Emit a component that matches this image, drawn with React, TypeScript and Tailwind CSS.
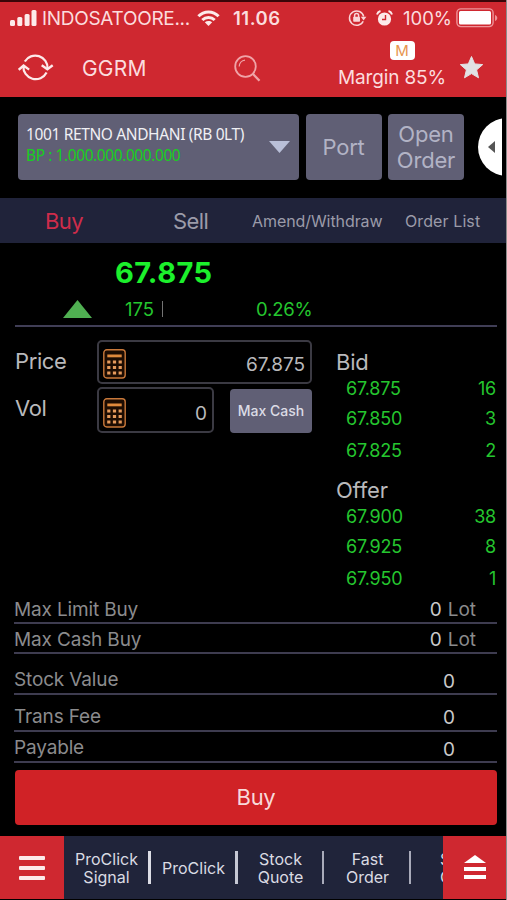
import type { ReactNode } from "react";

function Signal() {
  return (
    <svg className="block h-[17px] w-[27px]" viewBox="0 0 27 17" fill="#fdeaea">
      <rect x="0" y="10" width="5" height="6" rx="1.5" />
      <rect x="7.3" y="7" width="5" height="9" rx="1.5" />
      <rect x="14.6" y="4" width="5" height="12" rx="1.5" />
      <rect x="21.5" y="0" width="5" height="16" rx="1.5" />
    </svg>
  );
}

function Wifi() {
  return (
    <svg className="block h-[17px] w-[23px]" viewBox="0 0 23 17" fill="none" stroke="#fdeaea" strokeWidth="3">
      <path d="M1.400 6.200C7 .5 16 .5 21.600 6.200" />
      <path d="M5.300 10C8.800 6.600 14.200 6.600 17.700 10" />
      <path d="M7.800 12.300C10 10.400 13 10.400 15.200 12.300L11.500 16Z" fill="#fdeaea" stroke="none" />
    </svg>
  );
}

function RotationLock() {
  return (
    <svg className="block h-[18px] w-[19px]" viewBox="0 0 19 18" fill="none" stroke="#f9d5d7" strokeWidth="1.5">
      <path d="M15.200 12.200A7.200 7.200 0 1 1 15.700 7.500" />
      <path d="M12.800 7.800h5.600l-2.800 3.600z" fill="#f9d5d7" stroke="none" />
      <rect x="5.200" y="7.800" width="6.800" height="5" rx="0.800" fill="#f9d5d7" stroke="none" />
      <path d="M6.600 8V6.500a2 2 0 0 1 4 0V8" />
    </svg>
  );
}

function Alarm() {
  return (
    <svg className="block h-[17px] w-[17px]" viewBox="0 0 17 17">
      <circle cx="8.500" cy="9" r="6.600" fill="#fdeaea" />
      <path d="M1 4.500A5 5 0 0 1 4.500 1M12.500 1A5 5 0 0 1 16 4.500" stroke="#fdeaea" strokeWidth="2" fill="none" />
      <path d="M9.500 5v4.500H6" stroke="#cf2830" strokeWidth="1.400" fill="none" />
    </svg>
  );
}

function Battery() {
  return (
    <svg className="block h-[20px] w-[42px]" viewBox="0 0 42 20">
      <rect x="0.900" y="0.900" width="36.200" height="17.700" rx="4" fill="none" stroke="#ee9499" strokeWidth="1.400" />
      <rect x="3" y="3" width="32" height="13.500" rx="1.500" fill="#fff" />
      <path d="M39 7v6c3-1 3-5 0-6z" fill="#ee9499" />
    </svg>
  );
}

function Refresh() {
  return (
    <svg className="block h-[29px] w-[36px]" viewBox="0 0 36 29" fill="none" stroke="#fdeaea" strokeWidth="2.200">
      <path d="M6.800 8.500A12.300 12.300 0 0 1 29.600 15.500" />
      <path d="M28.600 19.500A12.300 12.300 0 0 1 5.400 13" />
      <path d="M23.700 12.300l5.700 3.900 5.300-3.900M0.700 16.800l4.900-4.200 5.500 4" strokeWidth="2.400" />
    </svg>
  );
}

function Search() {
  return (
    <svg className="block h-[27px] w-[27px]" viewBox="0 0 27 27" fill="none" stroke="#f0a3a7" strokeWidth="1.800">
      <circle cx="11.500" cy="11.500" r="10.300" />
      <path d="M5.200 11.500a6.500 6.500 0 0 1 5.800-6.300" strokeWidth="1.200" />
      <path d="M19 19l6.500 6.800" strokeWidth="2.300" />
    </svg>
  );
}

function Star() {
  return (
    <svg className="block h-[25px] w-[25px]" viewBox="0 0 25 25">
      <path d="M12.500 1.500l3.200 7.400 8 .7-6.100 5.300 1.900 7.900-7-4.200-7 4.200 1.900-7.900L1.300 9.600l8-.7z" fill="#e2e2e4" stroke="#e2e2e4" strokeLinejoin="round" />
    </svg>
  );
}

const keyRows = [13, 18.5, 24];
const keyCols = [5.8, 11.5, 17.2];

function Calculator() {
  return (
    <svg className="block h-[30px] w-[23px] shrink-0" viewBox="0 0 23 30">
      <rect x="0.800" y="0.800" width="21.400" height="28.200" rx="3" fill="#1c0c02" stroke="#c8783a" strokeWidth="1.400" />
      <rect x="4.300" y="5.500" width="14.400" height="2.800" fill="#e08a3c" />
      {keyRows.map((y) => keyCols.map((x) => (
        <rect key={`${x}-${y}`} x={x - 1.6} y={y - 1.5} width="3.200" height="3" fill="#e59a5c" />
      )))}
    </svg>
  );
}

function QuoteRow({ price, lots, className }: { price: string; lots: string; className: string }) {
  return (
    <div className={`flex items-center justify-between pl-[10px] text-[18px] leading-none tracking-[-0.2px] text-[#25c62f] ${className}`}>
      <span>{price}</span>
      <span>{lots}</span>
    </div>
  );
}

function SummaryRow({ label, children, className }: { label: string; children: ReactNode; className: string }) {
  return (
    <div className={`flex items-center justify-between border-b-2 border-[#3e3c50] text-[19px] leading-none text-[#8b8b8d] ${className}`}>
      <span className="tracking-[-0.15px]">{label}</span>
      {children}
    </div>
  );
}

function BottomItem({ children, divider }: { children: ReactNode; divider: string }) {
  return (
    <div className="flex h-[63px] w-[87px] shrink-0 items-center">
      <div className="w-[84px] pl-px text-center text-[16px] leading-[18px] text-[#dadbe3]">{children}</div>
      <div className={`h-[33px] ${divider}`} />
    </div>
  );
}

export default function App() {
  return (
    <div className="h-[900px] w-[507px] overflow-hidden border-r border-[#8c8c8c] bg-black font-['Inter','Liberation_Sans',sans-serif] whitespace-nowrap">
      <header className="h-[97px] border-t-2 border-[#3b0508] bg-[#cf2830] text-[#fbdcde]">
        <div className="flex h-[32px] items-center pl-[10px] text-[18px] leading-none">
          <Signal />
          <span className="ml-[5px] w-[155px] text-[19px] tracking-[-0.3px]">INDOSATOORE...</span>
          <Wifi />
          <span className="ml-[13px] w-[115px] text-[18.5px] font-semibold tracking-[0.5px]">11.06</span>
          <RotationLock />
          <span className="ml-[9px] w-[27px]"><Alarm /></span>
          <span className="w-[53px] text-[18.5px]">100%</span>
          <Battery />
        </div>
        <div className="flex h-[61px] items-center pl-[18px]">
          <span className="mt-[5px]"><Refresh /></span>
          <span className="mt-[7px] ml-[28px] w-[152px] text-[21px] leading-none tracking-[0.2px]">GGRM</span>
          <span className="mt-[8px]"><Search /></span>
          <div className="ml-[77px] flex w-[108px] flex-col items-center">
            <span className="ml-[20px] flex h-[19px] w-[25px] items-center justify-center rounded-[4px] bg-white text-[15px] leading-none text-[#e79550]">M</span>
            <span className="mt-[8px] text-[19px] leading-[20px] tracking-[-0.15px]">Margin 85%</span>
          </div>
          <span className="mt-[6px] ml-[13px]"><Star /></span>
        </div>
      </header>

      <section className="flex h-[101px] pt-[17px] pl-[18px]">
        <div className="flex h-[66px] w-[281px] items-center justify-between rounded-[4px] bg-[#605f75] pr-[9px] pl-[8px]">
          <div className="pb-[5px] font-['Noto_Sans','Open_Sans',sans-serif] text-[15.5px] leading-[21px]">
            <div className="tracking-[-0.37px] text-[#f0f0f4]">1001 RETNO ANDHANI (RB 0LT)</div>
            <div className="tracking-[-0.42px] text-[#17d020]">BP : 1.000.000.000.000</div>
          </div>
          <svg className="block h-[12px] w-[21px]" viewBox="0 0 21 12"><path d="M0 0h21L10.500 12z" fill="#b9bfd8" /></svg>
        </div>
        <div className="ml-[7px] flex h-[66px] w-[76px] items-center justify-center rounded-[4px] bg-[#605f75] pr-px text-[22px] tracking-[-0.2px] text-[#b2b3c5]">Port</div>
        <div className="ml-[6px] flex h-[66px] w-[76px] items-center justify-center rounded-[4px] bg-[#605f75] text-center text-[22px] leading-[26px] tracking-[-0.2px] text-[#b2b3c5]">Open<br />Order</div>
        <svg className="mt-[4px] ml-[14px] block h-[58px] w-[24px]" viewBox="0 0 24 58">
          <circle cx="29" cy="29" r="29" fill="#fff" />
          <path d="M17 23v12l-7-6z" fill="#555" />
        </svg>
      </section>

      <nav className="flex h-[45px] items-center bg-[#20233a] pl-[45px] text-[22px] leading-none tracking-[-0.6px] text-[#9b9ba9]">
        <span className="w-[128px] text-[#cf2c4b]">Buy</span>
        <span className="w-[79px]">Sell</span>
        <span className="w-[153px] text-[16px] tracking-[-0.08px]">Amend/Withdraw</span>
        <span className="text-[16px] tracking-[0.1px]">Order List</span>
      </nav>

      <section className="mr-[9px] ml-[15px] h-[84px] border-b-2 border-[#403e56]">
        <div className="pt-[12px] pl-[100px] text-[29px] leading-[36px] font-bold tracking-[0.4px] text-[#1cf02c]">67.875</div>
        <div className="flex h-[34px] items-center pt-[2px] pl-[48px] text-[18.5px] leading-none text-[#25c62f]">
          <svg className="block h-[18px] w-[29px]" viewBox="0 0 29 18"><path d="M14.500 0L29 18H0z" fill="#50b052" /></svg>
          <span className="mt-px ml-[33px] w-[37px]">175</span>
          <span className="h-[16px] w-px bg-[#737373]" />
          <span className="mt-px ml-[93px] tracking-[-0.2px]">0.26%</span>
        </div>
      </section>

      <section className="flex h-[268px] pl-[15px] text-[#b9b9bb]">
        <div className="w-[297px] pt-[13px] text-[22px] leading-none">
          <div className="flex h-[44px] items-center">
            <span className="w-[82px] pb-[3px] tracking-[-0.4px]">Price</span>
            <div className="flex h-[44px] flex-1 items-center justify-between rounded-[5px] border-2 border-[#3b3a43] pr-[5px] pl-[4px]">
              <span className="mt-[4px]"><Calculator /></span>
              <span className="mt-[4px] text-[19px]">67.875</span>
            </div>
          </div>
          <div className="mt-[3px] flex h-[46px] items-center">
            <span className="w-[82px] pb-[5px] tracking-[-0.4px]">Vol</span>
            <div className="flex h-[46px] w-[117px] items-center justify-between rounded-[5px] border-2 border-[#3b3a43] pr-[5px] pl-[4px]">
              <span className="mt-[5px]"><Calculator /></span>
              <span className="mt-[7px] text-[19px]">0</span>
            </div>
            <div className="mt-[2px] ml-[16px] flex h-[44px] w-[82px] items-center justify-center rounded-[4px] bg-[#605f75] text-[14px] font-medium text-[#dcdce5]">Max Cash</div>
          </div>
        </div>
        <div className="ml-[24px] w-[160px] pt-[24px] text-[22px] leading-none">
          <div className="h-[22px] tracking-[-0.2px]">Bid</div>
          <QuoteRow price="67.875" lots="16" className="h-[31px]" />
          <QuoteRow price="67.850" lots="3" className="h-[30px]" />
          <QuoteRow price="67.825" lots="2" className="h-[34px]" />
          <div className="mt-[11px] h-[22px] tracking-[-0.2px]">Offer</div>
          <QuoteRow price="67.900" lots="38" className="h-[31px]" />
          <QuoteRow price="67.925" lots="8" className="h-[30px]" />
          <QuoteRow price="67.950" lots="1" className="h-[34px]" />
        </div>
      </section>

      <section className="h-[169px] pr-[9px] pl-[14px]">
        <SummaryRow label="Max Limit Buy" className="h-[29px] pt-[2px] pr-[21px]">
          <span><span className="mr-[6px] text-[#c9c9c9]">0</span>Lot</span>
        </SummaryRow>
        <SummaryRow label="Max Cash Buy" className="h-[30px] pt-[2px] pr-[21px]">
          <span><span className="mr-[6px] text-[#c9c9c9]">0</span>Lot</span>
        </SummaryRow>
        <SummaryRow label="Stock Value" className="h-[41px] pt-[12px] pr-[42px]"><span className="mt-[3px] text-[#c9c9c9]">0</span></SummaryRow>
        <SummaryRow label="Trans Fee" className="h-[37px] pt-[7px] pr-[42px]"><span className="mt-[3px] text-[#c9c9c9]">0</span></SummaryRow>
        <SummaryRow label="Payable" className="h-[31px] pt-[2px] pr-[42px]"><span className="mt-[3px] text-[#c9c9c9]">0</span></SummaryRow>
      </section>

      <section className="h-[72px] pt-[6px] pr-[9px] pl-[15px]">
        <button className="block h-[55px] w-full rounded-[4px] bg-[#d02226] text-[22px] tracking-[-0.3px] text-[#f8d9da]">Buy</button>
      </section>

      <footer className="flex h-[63px] bg-[#20243a]">
        <div className="flex w-[64px] flex-col items-center justify-center gap-[6px] bg-[#cf2830]">
          <span className="h-[4px] w-[26px] rounded-[1px] bg-[#fdeaea]" />
          <span className="h-[4px] w-[26px] rounded-[1px] bg-[#fdeaea]" />
          <span className="h-[4px] w-[26px] rounded-[1px] bg-[#fdeaea]" />
        </div>
        <div className="flex w-[379px] overflow-hidden">
          <BottomItem divider="w-[3px] bg-[#dcdde5]">ProClick<br />Signal</BottomItem>
          <BottomItem divider="w-[3px] bg-[#c6c8d4]">ProClick</BottomItem>
          <BottomItem divider="w-[2px] bg-[#a9abba]">Stock<br />Quote</BottomItem>
          <BottomItem divider="w-[2px] bg-[#a9abba]">Fast<br />Order</BottomItem>
          <div className="flex items-center pl-[28px] text-[16px] leading-[18px] text-[#dadbe3]">Stock<br />Order</div>
        </div>
        <div className="flex w-[63px] items-center justify-center bg-[#cf2830]">
          <svg className="block h-[25px] w-[24px]" viewBox="0 0 24 25" fill="#fff"><path d="M12 0l11 8H1zM1 12h22v4H1zM1 20h22v4H1z" /></svg>
        </div>
      </footer>
    </div>
  );
}
